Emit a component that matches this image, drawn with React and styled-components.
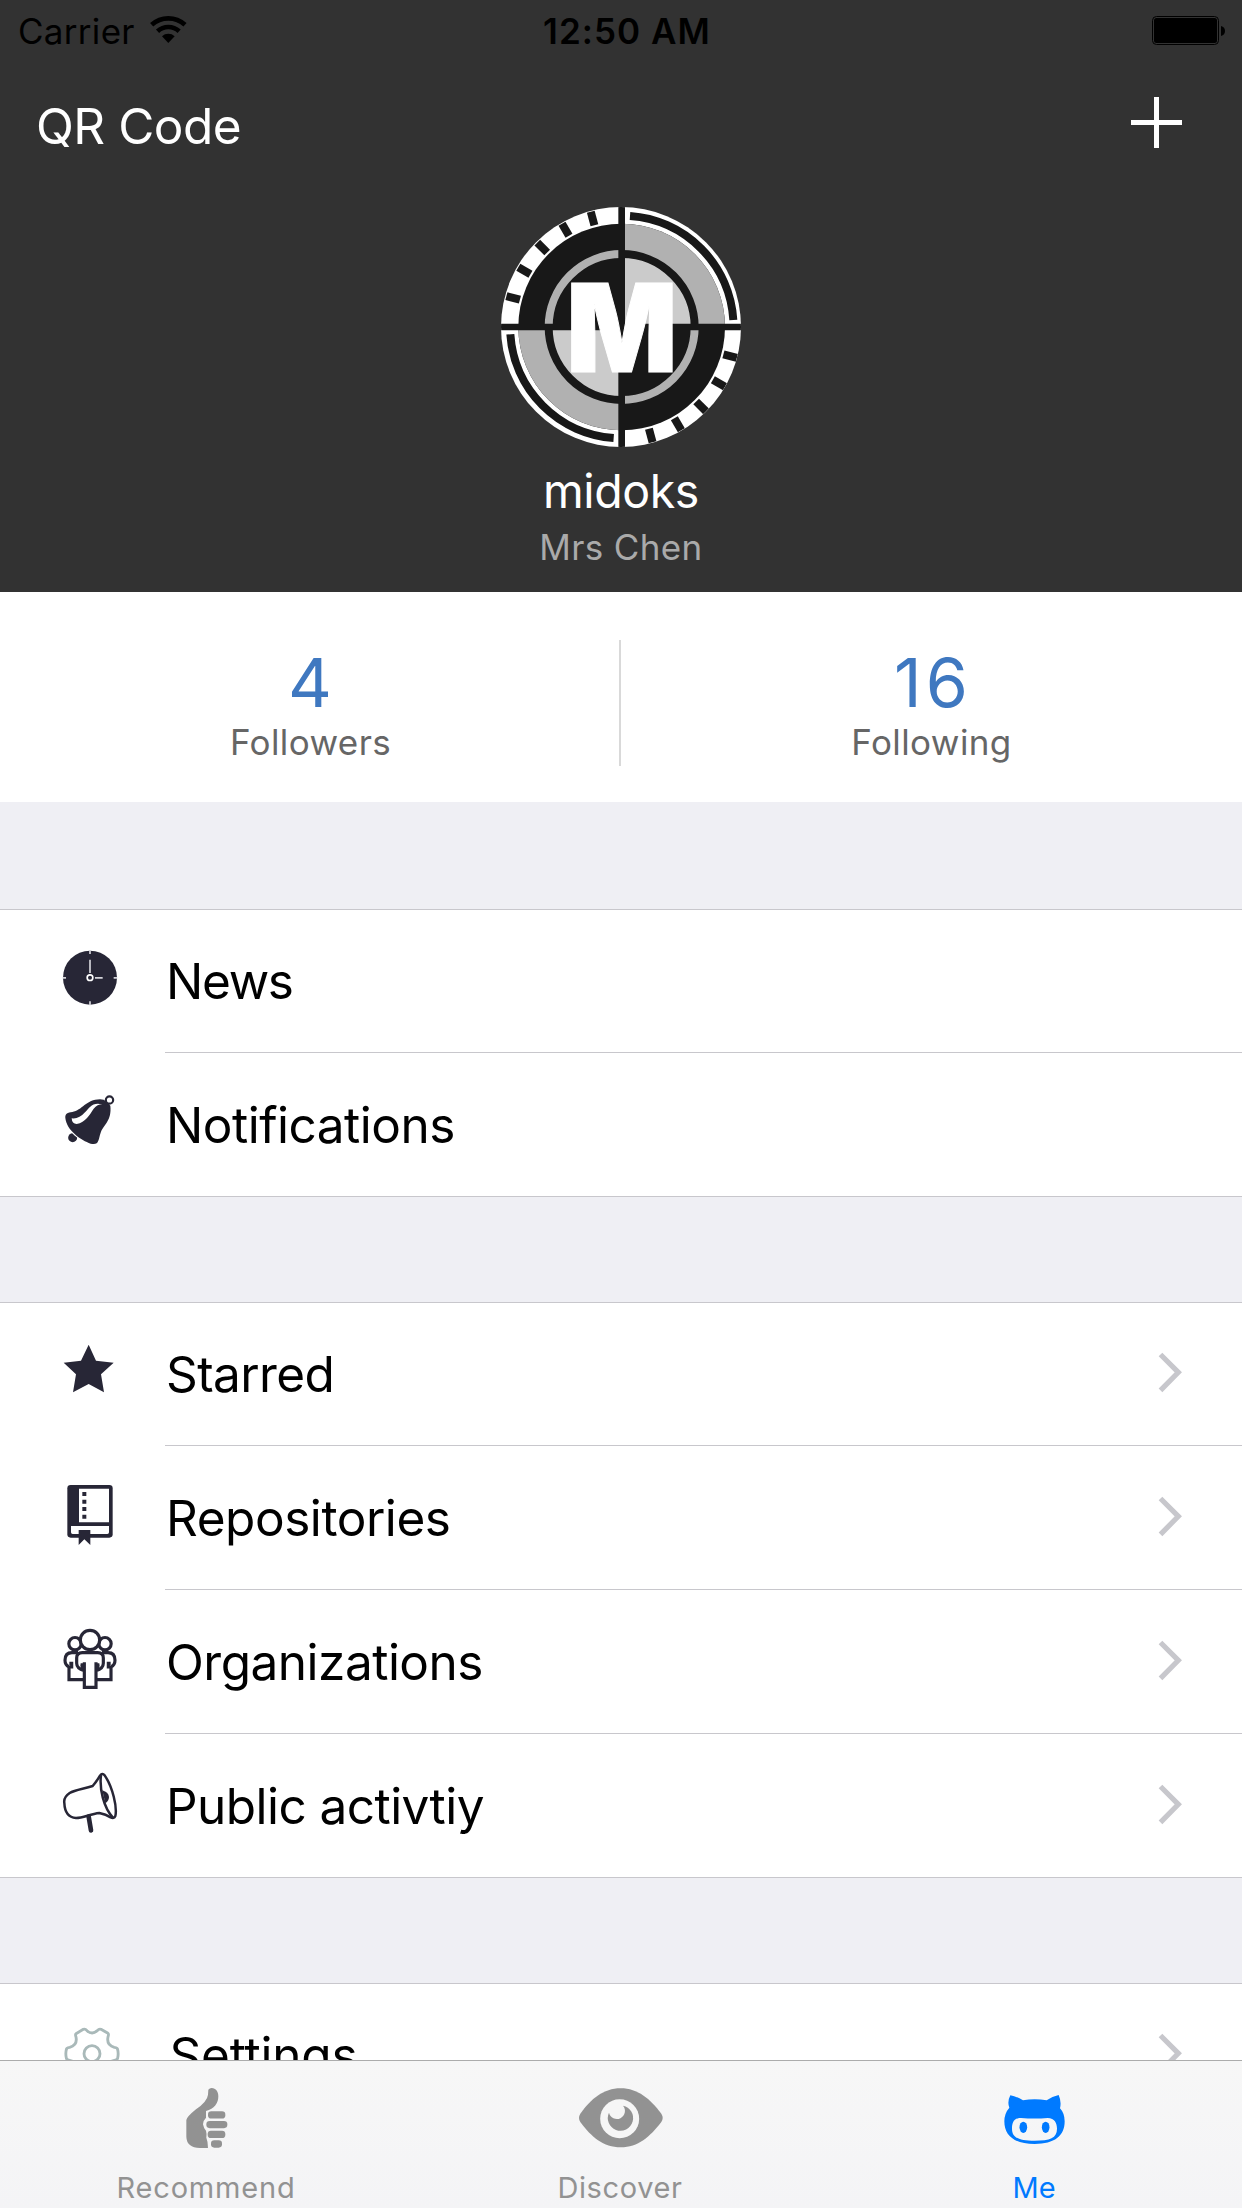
import React from "react";
import styled, { createGlobalStyle } from "styled-components";

const Global = createGlobalStyle`
  * { box-sizing: border-box; }
  body { margin: 0; background: #efeff4; }
  svg { display: block; flex: none; }
`;

const INK = "#272636";

const Screen = styled.div`
  width: 1242px;
  height: 2208px;
  display: flex;
  flex-direction: column;
  overflow: hidden;
  background: #efeff4;
  color: #000;
  font-family: Inter, "Liberation Sans", sans-serif;
  white-space: pre;
`;

const Scroll = styled.main`
  flex: 1;
  min-height: 0;
  overflow: hidden;
`;

const Header = styled.header`
  height: 592px;
  background: #323232;
  display: flex;
  flex-direction: column;
`;

const StatusBar = styled.div`
  display: grid;
  grid-template-columns: 1fr auto 1fr;
  height: 62px;
  padding: 0 16px 0 18px;
  font-size: 35px;
  line-height: 62px;
`;

const Carrier = styled.div`
  display: flex;
  gap: 15px;
  letter-spacing: 0.3px;
  svg { margin-top: 15px; }
`;

const Clock = styled.div`
  font-weight: 600;
  letter-spacing: 1.05px;
  padding-left: 10px;
`;

const BatterySlot = styled.div`
  display: flex;
  justify-content: flex-end;
  padding-top: 15px;
`;

const NavBar = styled.nav`
  height: 128px;
  padding: 0 60px 0 36px;
  display: flex;
  justify-content: space-between;
  font-size: 49.5px;
  line-height: 128px;
  letter-spacing: -0.5px;
  color: #fff;
  svg { margin-top: 35px; }
`;

const Profile = styled.div`
  display: flex;
  flex-direction: column;
  align-items: center;
  padding-top: 17px;
`;

const Name = styled.div`
  margin-top: 14px;
  font-size: 46.5px;
  line-height: 60px;
  letter-spacing: -0.4px;
  color: #fff;
`;

const FullName = styled.div`
  margin-top: 1px;
  font-size: 35px;
  line-height: 50px;
  letter-spacing: 0.35px;
  color: #aaa;
`;

const Stats = styled.section`
  height: 210px;
  background: #fff;
  display: flex;
`;

const Divider = styled.div`
  width: 2px;
  height: 126px;
  margin: 48px 0 0 -2px;
  background: #d9d9d9;
`;

const Stat = styled.div`
  flex: 1;
  padding-top: 50px;
  display: flex;
  flex-direction: column;
  align-items: center;
`;

const StatValue = styled.div`
  font-size: 68px;
  line-height: 80px;
  letter-spacing: 4px;
  margin-right: -3px;
  color: #3f78c0;
`;

const StatLabel = styled.div`
  font-size: 35px;
  line-height: 40px;
  letter-spacing: 0.4px;
  color: #666;
`;

const Section = styled.section`
  margin-top: ${(p) => p.$gap}px;
  background: #fff;
  border-top: 1px solid #c8c7cc;
  border-bottom: 1px solid #c8c7cc;
`;

const Row = styled.div`
  display: flex;
  height: 144px;
  &:first-child { margin-top: -1px; }
  &:last-child { height: 143px; }
`;

const IconCell = styled.div`
  width: 165px;
  padding: 32px 0 0 60px;
`;

const RowBody = styled.div`
  flex: 1;
  display: flex;
  justify-content: space-between;
  padding: 0 56px 0 ${(p) => p.$indent}px;
  border-bottom: 1px solid #c8c7cc;
  font-size: 49.5px;
  line-height: 144px;
  letter-spacing: ${(p) => p.$tracking}px;
  svg { margin-top: 32px; }
  ${Row}:last-child & { border-bottom: 0; }
`;

const TabBar = styled.nav`
  height: 148px;
  border-top: 1px solid #acacac;
  background: linear-gradient(#f7f7f7, #f4f4f6);
  display: flex;
`;

const Tab = styled.div`
  flex: 1;
  padding-top: 15px;
  display: flex;
  flex-direction: column;
  align-items: center;
  color: ${(p) => (p.$active ? "#007aff" : "#929292")};
`;

const TabLabel = styled.div`
  margin: 12px 2px 0 0;
  font-size: 29px;
  line-height: 40px;
  letter-spacing: ${(p) => p.$tracking}px;
`;

const Wifi = () => (
  <svg width="38" height="30" viewBox="450 45 114 90">
    <g fill="none" stroke="#000" strokeWidth="14">
      <path d="M455 74.4A74 74 0 0 1 555 74.4" />
      <path d="M472.6 93.6A48 48 0 0 1 537.4 93.6" />
    </g>
    <path d="M505 129L486 108.4A28 28 0 0 1 524 108.4Z" />
  </svg>
);

const Battery = () => (
  <svg width="74" height="31" viewBox="0 0 74 31">
    <rect x="0.5" y="1.5" width="66" height="28" rx="4" fill="none" stroke="#000" />
    <rect x="2" y="3" width="63" height="25" rx="2.5" />
    <path d="M69 11Q73 12 73 16T69 21Z" />
  </svg>
);

const Plus = () => (
  <svg width="51" height="51" viewBox="0 0 51 51" fill="#fff">
    <path d="M23 0H28V23H51V28H28V51H23V28H0V23H23Z" />
  </svg>
);

const TICKS = [15, 30, 45, 60, 75, 195, 210, 225, 240, 255];

const Avatar = () => (
  <svg width="240" height="240" viewBox="63 51 720 720">
    <defs>
      <clipPath id="disc"><circle cx="423" cy="411" r="360" /></clipPath>
      <clipPath id="light"><path d="M425 51H783V411H425ZM63 411H425V771H63Z" /></clipPath>
    </defs>
    <g clipPath="url(#disc)">
      <rect x="63" y="51" width="720" height="720" fill="#fff" />
      <circle cx="425" cy="411" r="310" fill="#181818" />
      <circle cx="425" cy="411" r="219" fill="none" stroke="#b1b1b1" strokeWidth="24" />
      {TICKS.map((a) => (
        <rect key={a} x="413" y="53" width="24" height="42" fill="#181818" transform={`rotate(${-a} 425 411)`} />
      ))}
      <g clipPath="url(#light)">
        <circle cx="425" cy="411" r="310" fill="#b1b1b1" />
        <circle cx="425" cy="411" r="219" fill="#cbcbcb" stroke="#181818" strokeWidth="24" />
        <g fill="none" stroke="#181818" strokeWidth="24">
          <path d="M450 78A334 334 0 0 1 760 390" />
          <path d="M401 744A334 334 0 0 1 91 433" />
        </g>
      </g>
      <path d="M415 51H435V401H783V421H435V771H415V421H63V401H415Z" fill="#181818" />
      <text x="259" y="545" fontFamily="Inter, sans-serif" fontWeight="900" fontSize="368" fill="#fff" stroke="#fff" strokeWidth="3" textLength="334" lengthAdjust="spacingAndGlyphs">M</text>
    </g>
  </svg>
);

const RowIcon = ({ origin, children }) => (
  <svg width="60" height="80" viewBox={`${origin} 180 240`}>{children}</svg>
);

const NewsIcon = () => (
  <RowIcon origin="60 153">
    <circle cx="150" cy="263" r="81" fill={INK} />
    <g stroke="#d4d4da" strokeWidth="5" fill="none">
      <path d="M150 181V192M150 334V346M68 263.500H78M221 263.500H232" />
      <path d="M150 209V249M165 263.500H188" />
      <circle cx="150" cy="263" r="8.500" stroke="#fff" />
    </g>
  </RowIcon>
);

const BellIcon = () => (
  <RowIcon origin="60 585">
    <circle cx="98" cy="743" r="13.500" fill={INK} />
    <path d="M76 684C75 671 83 667 97 666C126 662 138 628 180 628Q192 628 200 635Q206 641 211 647C216 690 192 704 183 725C178 738 177 754 170 760Q164 764 152 761C124 751 80 722 76 684Z" fill={INK} stroke="#fff" strokeWidth="7" paintOrder="stroke" />
    <path d="M95 685Q96 702 110 702C137 697 149 674 161 656Q172 643 187 643C157 635 148 653 135 667Q117 688 95 685Z" fill="#fff" />
    <circle cx="208.500" cy="630" r="11" fill="#fff" stroke={INK} strokeWidth="6.500" />
  </RowIcon>
);

const StarIcon = () => (
  <RowIcon origin="60 102">
    <path d="M146 134L168 182L221 188L183 223L192 277L146 252L99 277L108 223L71 188L123 182Z" fill={INK} />
  </RowIcon>
);

const RepoIcon = () => (
  <RowIcon origin="60 534">
    <rect x="82" y="555" width="136" height="158" rx="10" fill={INK} />
    <path d="M117 566H207V667H117ZM93 678H207V697Q207 702 202 702H98Q93 702 93 697Z" fill="#fff" />
    <path d="M127 576H139V588H127ZM127 599H139V611H127ZM127 621H139V633H127ZM127 644H139V656H127ZM116 690H151V735L133 718L116 735Z" fill={INK} />
  </RowIcon>
);

const OrgIcon = () => (
  <RowIcon origin="60 66">
    <g fill="none" stroke={INK} strokeWidth="9.500">
      <circle cx="105" cy="131" r="18.500" />
      <circle cx="195" cy="131" r="18.500" />
      <circle cx="150" cy="120" r="29" fill="#fff" />
      <path d="M114 158H96Q75 158 75 181Q75 195 87 201V239H130M88 190H95V201H87" />
      <path d="M186 158H204Q225 158 225 181Q225 195 213 201V239H170M212 190H205V201H213" />
      <path d="M133 187V262H168V187M133 212Q110 206 110 190V174Q110 158 127 158H173Q190 158 190 174V190Q190 206 168 212" />
    </g>
    <path d="M122 190H130V211Q122 205 121 198ZM178 190H171V211Q178 205 179 198Z" fill={INK} />
  </RowIcon>
);

const MegaphoneIcon = () => (
  <RowIcon origin="60 498">
    <g fill="none" stroke={INK} strokeWidth="7.500" strokeLinejoin="round">
      <path d="M158 558C130 567 105 569 89 579Q70 592 73 609C74 635 84 652 108 654C130 654 150 642 178 639Q198 643 212 652Q222 657 226 648C232 622 218 561 194 526Q187 518 180 527Q170 544 158 558Z" />
      <path d="M183 525C178 565 190 623 220 654" />
      <path d="M146 650L153 691" strokeWidth="14" strokeLinecap="round" />
    </g>
    <path d="M187 571Q205 577 207 590Q207 602 196 610Z" fill={INK} />
  </RowIcon>
);

const GearIcon = () => (
  <RowIcon origin="180 165">
    <g fill="none" stroke="#a9b9b9" strokeWidth="8.500" strokeLinejoin="round">
      <path d="M228 221L250 208Q256 206 261 212Q276 226 292 212Q297 206 303 208L324 220Q327 222 324 231Q319 256 343 262Q353 263 353 269Q356 281 353 294Q353 299 343 301Q319 306 324 332Q327 340 324 342L303 355Q297 357 292 351Q276 337 261 351Q256 357 250 355L228 342Q225 340 228 332Q233 306 209 301Q199 299 199 294Q196 281 199 269Q199 263 209 262Q233 256 228 231Q225 223 228 221Z" />
      <circle cx="276" cy="281" r="24" />
    </g>
  </RowIcon>
);

const Chevron = () => (
  <svg width="30" height="80" viewBox="108 12 90 240">
    <path d="M121.500 73.500L175 127L121.500 181" fill="none" stroke="#c7c7cc" strokeWidth="15.500" />
  </svg>
);

const TabIcon = ({ origin, children }) => (
  <svg width="100" height="80" viewBox={`${origin} 300 240`} fill="currentColor">{children}</svg>
);

const ThumbIcon = () => (
  <TabIcon origin="471 348">
    <path d="M625 389Q632 380 645 387Q655 394 655 409Q655 442 618 453V473Q608 483 609 493Q611 505 618 512Q621 523 619 533Q624 545 624 564H600Q560 563 559 530V480Q561 470 588 448Q622 424 624 404Z" />
    <rect x="624" y="454" width="52" height="21.500" rx="10" />
    <rect x="619" y="483" width="63" height="21.500" rx="10" />
    <rect x="623" y="512" width="53" height="22" rx="10" />
    <rect x="633" y="541" width="33" height="22" rx="10" />
  </TabIcon>
);

const EyeIcon = () => (
  <TabIcon origin="213 348">
    <path d="M237 474Q237 467 241 461C273 417 310 385 362 385S450 417 484 461Q488 467 488 474Q488 480 484 486C450 530 414 562 362 562S273 530 241 486Q237 480 237 474Z" />
    <circle cx="359" cy="476" r="58.500" fill="#f6f6f6" />
    <path d="M327 458A38 38 0 1 0 369 437A24.200 24.200 0 1 1 327 458Z" />
  </TabIcon>
);

const OctocatIcon = () => (
  <TabIcon origin="255 348">
    <path fillRule="evenodd" d="M331 406Q350 409 369 421Q404 415 440 421Q457 409 476 405Q485 425 480 445Q494 460 494 484C494 528 464 552 404 552S313 528 313 484Q313 460 328 443Q321 425 331 406ZM363 474C340 474 336 490 336 506C336 534 358 542 404 542S471 534 471 506C471 490 464 474 443 474Q404 477 363 474Z" />
    <ellipse cx="370" cy="502" rx="11.500" ry="17" />
    <ellipse cx="437" cy="502" rx="11.500" ry="17" />
  </TabIcon>
);

const sections = [
  { gap: 107, rows: [
    { label: "News", icon: NewsIcon, tracking: -1.3 },
    { label: "Notifications", icon: BellIcon, tracking: -0.5 },
  ] },
  { gap: 105, rows: [
    { label: "Starred", icon: StarIcon, tracking: -0.6, link: true },
    { label: "Repositories", icon: RepoIcon, tracking: -0.45, link: true },
    { label: "Organizations", icon: OrgIcon, tracking: -0.5, link: true },
    { label: "Public activtiy", icon: MegaphoneIcon, tracking: -0.55, link: true },
  ] },
  { gap: 105, rows: [
    { label: "Settings", icon: GearIcon, tracking: -0.2, link: true, indent: 4.5 },
  ] },
];

const tabs = [
  { label: "Recommend", icon: ThumbIcon, tracking: 0.8 },
  { label: "Discover", icon: EyeIcon, tracking: 0.63 },
  { label: "Me", icon: OctocatIcon, tracking: 0, active: true },
];

export default function App() {
  return (
    <Screen>
      <Global />
      <Scroll>
        <Header>
          <StatusBar>
            <Carrier>Carrier<Wifi /></Carrier>
            <Clock>12:50 AM</Clock>
            <BatterySlot><Battery /></BatterySlot>
          </StatusBar>
          <NavBar>QR Code<Plus /></NavBar>
          <Profile>
            <Avatar />
            <Name>midoks</Name>
            <FullName>Mrs Chen</FullName>
          </Profile>
        </Header>
        <Stats>
          <Stat><StatValue>4</StatValue><StatLabel>Followers</StatLabel></Stat>
          <Divider />
          <Stat><StatValue>16</StatValue><StatLabel>Following</StatLabel></Stat>
        </Stats>
        {sections.map((section, i) => (
          <Section key={i} $gap={section.gap}>
            {section.rows.map(({ label, icon: Icon, tracking, link, indent = 1 }) => (
              <Row key={label}>
                <IconCell><Icon /></IconCell>
                <RowBody $tracking={tracking} $indent={indent}>{label}{link && <Chevron />}</RowBody>
              </Row>
            ))}
          </Section>
        ))}
      </Scroll>
      <TabBar>
        {tabs.map(({ label, icon: Icon, tracking, active }) => (
          <Tab key={label} $active={active}>
            <Icon />
            <TabLabel $tracking={tracking}>{label}</TabLabel>
          </Tab>
        ))}
      </TabBar>
    </Screen>
  );
}
